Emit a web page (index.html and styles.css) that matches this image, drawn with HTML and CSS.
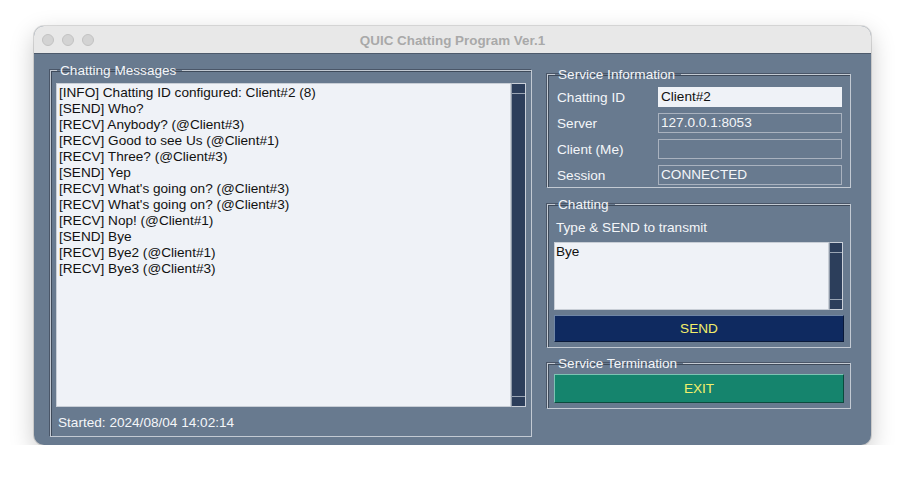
FILE: index.html
```html
<!DOCTYPE html>
<html>
<head>
<meta charset="utf-8">
<link rel="stylesheet" href="styles.css">
</head>
<body>
<div class="window">
  <div class="titlebar">
    <div class="lights"><span></span><span></span><span></span></div>
    <div class="title">QUIC Chatting Program Ver.1</div>
  </div>
  <div class="content">
    <fieldset class="group messages">
      <legend>Chatting Messages</legend>
      <div class="listwrap">
        <div class="list">
          <div>[INFO] Chatting ID configured: Client#2 (8)</div>
          <div>[SEND] Who?</div>
          <div>[RECV] Anybody? (@Client#3)</div>
          <div>[RECV] Good to see Us (@Client#1)</div>
          <div>[RECV] Three? (@Client#3)</div>
          <div>[SEND] Yep</div>
          <div>[RECV] What's going on? (@Client#3)</div>
          <div>[RECV] What's going on? (@Client#3)</div>
          <div>[RECV] Nop! (@Client#1)</div>
          <div>[SEND] Bye</div>
          <div>[RECV] Bye2 (@Client#1)</div>
          <div>[RECV] Bye3 (@Client#3)</div>
        </div>
        <div class="scroll"><div class="arrow top"></div><div class="track"></div><div class="arrow bottom"></div></div>
      </div>
      <div class="started">Started: 2024/08/04 14:02:14</div>
    </fieldset>
    <div class="side">
      <fieldset class="group info">
        <legend>Service Information</legend>
        <div class="row"><span class="lbl">Chatting ID</span><span class="entry editable">Client#2</span></div>
        <div class="row"><span class="lbl">Server</span><span class="entry">127.0.0.1:8053</span></div>
        <div class="row"><span class="lbl">Client (Me)</span><span class="entry"></span></div>
        <div class="row"><span class="lbl">Session</span><span class="entry">CONNECTED</span></div>
      </fieldset>
      <fieldset class="group chat">
        <legend>Chatting</legend>
        <div class="hint">Type &amp; SEND to transmit</div>
        <div class="textwrap">
          <div class="textbox">Bye</div>
          <div class="scroll small"><div class="arrow top"></div><div class="track"></div><div class="arrow bottom"></div></div>
        </div>
        <div class="btn send">SEND</div>
      </fieldset>
      <fieldset class="group term">
        <legend>Service Termination</legend>
        <div class="btn exit">EXIT</div>
      </fieldset>
    </div>
  </div>
</div>
</body>
</html>
```

FILE: styles.css
```css
* { box-sizing: border-box; }
html, body { margin: 0; padding: 0; background: #ffffff; }
body {
  font-family: "Liberation Sans", Arial, sans-serif;
  font-size: 13.6px;
  padding: 26px 0 0 34px;
}
.window {
  width: 837px;
  height: 419px;
  border-radius: 10px;
  overflow: hidden;
  background: #687a8f;
  box-shadow: 0 0 0 1px rgba(0,0,0,0.12), 0 8px 24px rgba(0,0,0,0.22);
  display: flex;
  flex-direction: column;
}
.titlebar {
  height: 28px;
  flex: none;
  background: #e8e8e8;
  border-bottom: 1px solid #4d5a6b;
  position: relative;
  display: flex;
  align-items: center;
  justify-content: center;
}
.lights {
  position: absolute;
  left: 8px;
  top: 8px;
  display: flex;
  gap: 8px;
}
.lights span {
  width: 12px;
  height: 12px;
  border-radius: 50%;
  background: #d3d3d3;
  border: 1px solid #c2c2c2;
}
.title {
  font-weight: bold;
  color: #a9a9a9;
  font-size: 13.4px;
  margin-top: 1px;
}
.content {
  flex: 1;
  display: flex;
  gap: 15px;
  padding: 9px 0 0 16px;
}
.group {
  margin: 0;
  min-width: 0;
  border: 1px solid #c3cad3;
  box-shadow: inset 1px 1px 0 #3e4a5a, -1px -1px 0 #4a5668;
}
.group legend {
  color: #f4f6f9;
  line-height: 14px;
  padding: 0 6px 0 3px;
  font-size: 13.6px;
  position: relative;
  top: 1px;
}
.messages {
  width: 482px;
  height: 374px;
  padding: 6px 5px 5px 5px;
  display: flex;
  flex-direction: column;
}
.messages legend { margin-left: 1px; }
.listwrap {
  height: 324px;
  display: flex;
}
.list {
  flex: 1;
  background: #eff2f7;
  border: 1px solid #c8ced6;
  padding: 1px 2px;
  line-height: 16px;
  color: #111;
}
.scroll {
  width: 15px;
  background: #2c3e5b;
  border: 1px solid #c9cfd8;
  border-left-color: #8e99a8;
  display: flex;
  flex-direction: column;
}
.scroll .arrow { height: 10px; flex: none; }
.scroll .arrow.top { border-bottom: 1px solid #9aa5b4; }
.scroll .arrow.bottom { border-top: 1px solid #9aa5b4; }
.scroll .track { flex: 1; }
.started {
  margin-top: 8px;
  line-height: 16px;
  color: #f4f6f9;
  padding-left: 2px;
}
.side {
  width: 304px;
  padding-top: 4px;
  display: flex;
  flex-direction: column;
}
.info {
  padding: 6px 8px 2px 9px;
  display: flex;
  flex-direction: column;
  gap: 6px;
}
.info legend { margin-left: -2px; }
.row {
  display: flex;
  height: 20px;
  align-items: center;
}
.lbl {
  width: 101px;
  color: #f4f6f9;
}
.entry {
  width: 184px;
  height: 20px;
  border: 1px solid #a9b2bf;
  color: #f4f6f9;
  padding: 0 2px;
  line-height: 18px;
}
.entry.editable {
  background: #eff2f7;
  border-color: #eff2f7;
  color: #111;
}
.chat {
  margin-top: 9px;
  padding: 9px 6px 5px 6px;
}
.chat legend { margin-left: 1px; }
.hint {
  color: #f4f6f9;
  line-height: 16px;
  padding-left: 2px;
}
.textwrap {
  margin-top: 6px;
  height: 68px;
  display: flex;
  width: 289px;
}
.textbox {
  flex: 1;
  background: #eff2f7;
  border: 1px solid #c8ced6;
  padding: 1px 1px;
  line-height: 16px;
  color: #111;
}
.scroll.small { width: 14px; }
.btn {
  display: flex;
  align-items: center;
  justify-content: center;
  color: #f3ef6a;
  font-size: 13.6px;
}
.send {
  margin-top: 5px;
  height: 27px;
  background: #0f2a60;
  border: 1px solid #6f86a6;
  border-right-color: #0a1a3a;
  border-bottom-color: #0a1a3a;
}
.term {
  margin-top: 8px;
  padding: 4px 6px 5px 6px;
}
.term legend { margin-left: 1px; }
.exit {
  height: 29px;
  background: #15846d;
  border: 1px solid #7cc3b3;
  border-right-color: #0b4a3d;
  border-bottom-color: #0b4a3d;
}
```
